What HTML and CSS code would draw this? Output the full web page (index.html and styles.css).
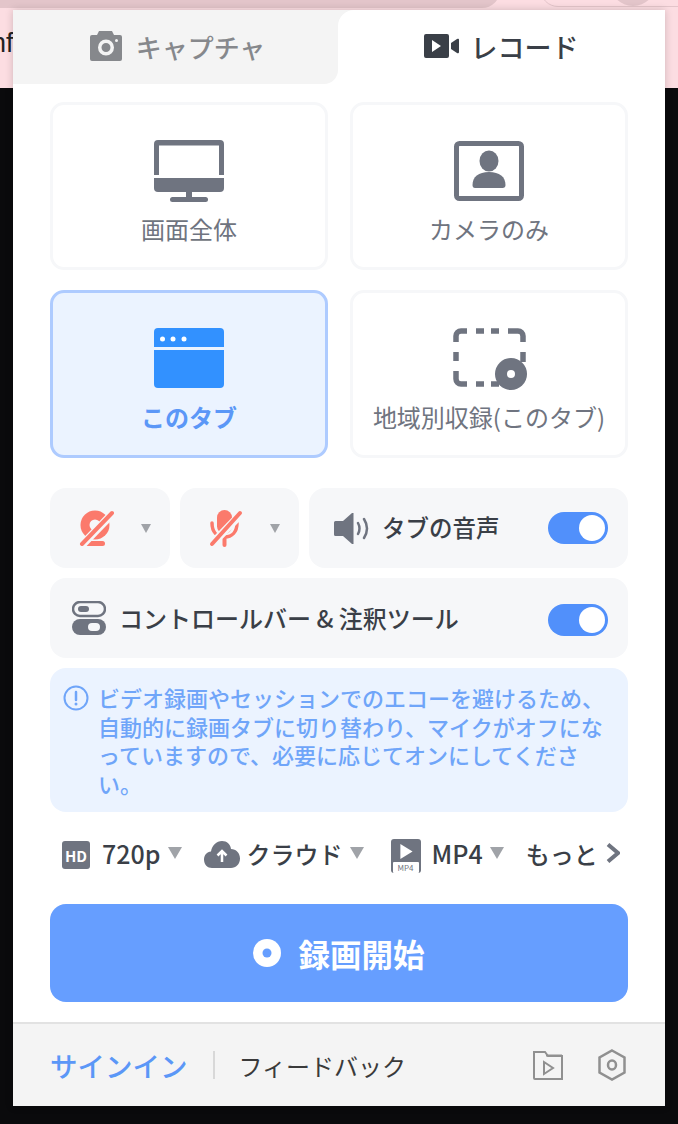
FILE: index.html
```html
<!DOCTYPE html>
<html lang="ja">
<head>
  <meta charset="UTF-8">
  <meta name="viewport" content="width=device-width, initial-scale=1">
  <title>レコード</title>
  <link rel="stylesheet" href="styles.css">
</head>
<body>
  <div class="backdrop">
    <div class="backdrop-bar"></div>
    <div class="backdrop-pill"></div>
    <div class="backdrop-avatar"></div>
    <span class="backdrop-text">nf</span>
  </div>

  <div class="popup">
    <div class="tabs">
      <div class="tab tab-off">
        <svg width="32" height="30" viewBox="0 0 32 30"><path fill="#86888c" fill-rule="evenodd" d="M9 0h13l2 4h6a2 2 0 0 1 2 2v22a2 2 0 0 1-2 2H2a2 2 0 0 1-2-2V6a2 2 0 0 1 2-2h5zM16 8.500a8 8 0 1 0 0 16 8 8 0 0 0 0-16zM16 12a4.500 4.500 0 1 1 0 9 4.500 4.500 0 0 1 0-9zM26.500 8a1.500 1.500 0 1 0 0 3 1.500 1.500 0 0 0 0-3z"/></svg>
        <span>キャプチャ</span>
      </div>
      <div class="tab tab-on">
        <svg width="35" height="24" viewBox="0 0 35 24"><path fill="#3a3f47" fill-rule="evenodd" d="M2 0h21a2 2 0 0 1 2 2v20a2 2 0 0 1-2 2H2a2 2 0 0 1-2-2V2a2 2 0 0 1 2-2zM8 6v12l9-6z"/><path fill="#3a3f47" d="M27 9l6-4a1.200 1.200 0 0 1 2 1v12a1.200 1.200 0 0 1-2 1l-6-4z"/></svg>
        <span>レコード</span>
      </div>
    </div>

    <div class="panel">
      <div class="modes">
        <div class="mode">
          <svg width="70" height="62" viewBox="0 0 70 62"><g fill="#6f7480"><path d="M0 35V4a4 4 0 0 1 4-4h62a4 4 0 0 1 4 4v31h-5V5.500H5V35z"/><path d="M0 38h70v10a4 4 0 0 1-4 4H4a4 4 0 0 1-4-4z"/><rect x="32" y="52" width="6" height="6"/><rect x="16" y="57" width="38" height="5" rx="2.500"/></g></svg>
          <span>画面全体</span>
        </div>
        <div class="mode">
          <svg width="70" height="62" viewBox="0 -1 70 62"><rect x="2.500" y="2.500" width="65" height="55" rx="3" fill="none" stroke="#6f7480" stroke-width="5"/><ellipse cx="35" cy="20" rx="9.500" ry="10.500" fill="#6f7480"/><path fill="#6f7480" d="M18.500 44c0-8 6-13 16.500-13s16.500 5 16.500 13q0 3-3 3H21q-2.500 0-2.500-3z"/></svg>
          <span>カメラのみ</span>
        </div>
        <div class="mode mode-on">
          <svg width="70" height="62" viewBox="0 0 70 62"><path fill="#3291ff" d="M4 0h62a4 4 0 0 1 4 4v15H0V4a4 4 0 0 1 4-4z"/><path fill="#3291ff" d="M0 22h70v34a4 4 0 0 1-4 4H4a4 4 0 0 1-4-4z"/><g fill="#fff"><circle cx="8.500" cy="11" r="2.500"/><circle cx="19" cy="11" r="2.500"/><circle cx="30" cy="11" r="2.500"/></g></svg>
          <span>このタブ</span>
        </div>
        <div class="mode">
          <svg width="76" height="62" viewBox="-2 0 76 62"><g fill="none" stroke="#6f7480" stroke-width="5.500"><path d="M3 14V8a5 5 0 0 1 5-5h6"/><path d="M23 3h8M38 3h8"/><path d="M55 3h10a5 5 0 0 1 5 5v6"/><path d="M3 24v9"/><path d="M70 24v10"/><path d="M3 43v8a5 5 0 0 0 5 5h6"/><path d="M23 56h8M38 56h8"/></g><circle cx="58" cy="46" r="16" fill="#6f7480"/><circle cx="58" cy="46" r="4" fill="#fff"/></svg>
          <span>地域別収録(このタブ)</span>
        </div>
      </div>

      <div class="controls">
        <div class="box box-device">
          <svg width="35" height="36" viewBox="-1 0 35 36"><circle cx="15" cy="15" r="14.500" fill="#fb7a6c"/><circle cx="15" cy="15" r="5.500" fill="#f6f7f9"/><rect x="5" y="31" width="20" height="5" rx="2.500" fill="#fb7a6c"/><path d="M2 35L32 4" stroke="#f6f7f9" stroke-width="8"/><path d="M2 34L32 3" stroke="#fb7a6c" stroke-width="4" stroke-linecap="round"/></svg>
          <i class="caret"></i>
        </div>
        <div class="box box-device">
          <svg width="34" height="38" viewBox="0 0 34 38"><rect x="8" y="1" width="15" height="24" rx="7.500" fill="#fb7a6c"/><path d="M3 14c0 9 5 14 12.500 14S28 23 28 14" fill="none" stroke="#fb7a6c" stroke-width="3.500" stroke-linecap="round"/><path d="M15.500 28v8" stroke="#fb7a6c" stroke-width="4" stroke-linecap="round"/><path d="M2 36L32 5" stroke="#f6f7f9" stroke-width="8"/><path d="M3 35L31 4" stroke="#fb7a6c" stroke-width="4" stroke-linecap="round"/></svg>
          <i class="caret"></i>
        </div>
        <div class="box box-audio">
          <svg width="35" height="31" viewBox="0 0 35 31"><path fill="#6f7480" d="M1.500 8H9l9-8h1.500v31H18l-9-8H1.500A1.500 1.500 0 0 1 0 21.500v-12A1.500 1.500 0 0 1 1.500 8z"/><path fill="none" stroke="#6f7480" stroke-width="2.500" stroke-linecap="round" d="M24 10q3 5.500 0 11M30 6q6 9.500 0 19"/></svg>
          <span class="box-label">タブの音声</span>
          <div class="toggle"><i></i></div>
        </div>
        <div class="box box-bar">
          <svg width="34" height="34" viewBox="0 0 34 34"><rect x="1" y="1" width="32" height="14" rx="7" fill="none" stroke="#6f7480" stroke-width="2.500"/><rect x="6" y="5" width="11" height="6" rx="3" fill="#6f7480"/><rect y="18" width="34" height="16" rx="8" fill="#6f7480"/><rect x="16" y="22" width="12" height="8" rx="4" fill="#f6f7f9"/></svg>
          <span class="box-label">コントロールバー &amp; 注釈ツール</span>
          <div class="toggle"><i></i></div>
        </div>
      </div>

      <div class="notice">
        <svg width="26" height="26" viewBox="0 0 26 26"><circle cx="13" cy="13" r="11.500" fill="none" stroke="#6fa5f9" stroke-width="2"/><path d="M13 7v8" stroke="#6fa5f9" stroke-width="2.500" stroke-linecap="round"/><circle cx="13" cy="19" r="1.500" fill="#6fa5f9"/></svg>
        <p>ビデオ録画やセッションでのエコーを避けるため、自動的に録画タブに切り替わり、マイクがオフになっていますので、必要に応じてオンにしてください。</p>
      </div>

      <div class="options">
        <div class="option">
          <span class="hd">HD</span>
          <span class="option-text option-latin">720p</span>
          <i class="caret caret-big"></i>
        </div>
        <div class="option">
          <svg class="cloud" width="36" height="27" viewBox="0 0 36 27"><path fill="#6f7480" d="M18 0c5 0 8.500 3.500 9 8 5 0 9 4 9 9.500S32 27 27 27H8c-4.500 0-8-3.500-8-8.500C0 14 3 11 7 10.500 8 4.500 12.500 0 18 0z"/><path d="M18 21v-11M13.500 14.500L18 10l4.500 4.500" fill="none" stroke="#fff" stroke-width="2.500"/></svg>
          <span class="option-text">クラウド</span>
          <i class="caret caret-big"></i>
        </div>
        <div class="option option-format">
          <div class="mp4">
            <svg width="14" height="16" viewBox="0 0 14 16"><path d="M1 0l13 8-13 8z" fill="#fff"/></svg>
            <span>MP4</span>
          </div>
          <span class="option-text option-latin">MP4</span>
          <i class="caret caret-big"></i>
        </div>
        <div class="option option-more">
          <span class="option-text">もっと</span>
          <svg width="14" height="20" viewBox="0 0 14 20"><path d="M2 1.500l10 8.500-10 8.500" fill="none" stroke="#6f7480" stroke-width="4"/></svg>
        </div>
      </div>

      <button class="start">
        <svg width="28" height="28" viewBox="0 0 28 28"><circle cx="14" cy="14" r="14" fill="#fff"/><circle cx="14" cy="14" r="4.500" fill="#669eff"/></svg>
        <span>録画開始</span>
      </button>
    </div>

    <div class="footer">
      <a class="signin">サインイン</a>
      <span class="feedback">フィードバック</span>
      <div class="footer-icons">
        <svg width="30" height="30" viewBox="0 0 30 30"><g fill="none" stroke="#909090" stroke-width="2"><path d="M1 28V2h11l3 4h14v23H2a1 1 0 0 1-1-1z"/><path d="M13 5.500h16"/><path d="M11 12l9 6-9 6z"/></g></svg>
        <svg width="28" height="32" viewBox="0 0 28 32"><g fill="none" stroke="#909090" stroke-width="2.500"><path d="M14 1.500l12.500 7v15l-12.500 7-12.500-7v-15z"/><ellipse cx="14" cy="16" rx="4" ry="4.500"/></g></svg>
      </div>
    </div>
  </div>
</body>
</html>
```

FILE: styles.css
```css
* {
  box-sizing: border-box;
}
html, body {
  height: 100%;
}
body {
  margin: 0;
  background: #0a0a0c;
  font-family: 'Noto Sans CJK JP', 'Noto Sans', sans-serif;
  overflow: hidden;
  position: relative;
}

/* page behind the popup */
.backdrop {
  position: absolute;
  top: 0;
  left: 0;
  right: 0;
  height: 88px;
  background: #fcdde2;
  overflow: hidden;
}
.backdrop-bar {
  position: absolute;
  top: -30px;
  left: -20px;
  width: 520px;
  height: 38px;
  background: #e3c5ca;
  border-radius: 18px;
}
.backdrop-pill {
  position: absolute;
  top: -30px;
  left: 540px;
  width: 180px;
  height: 37px;
  border: 1px solid #e3c5ca;
  border-radius: 18px;
}
.backdrop-avatar {
  position: absolute;
  top: -40px;
  left: 610px;
  width: 46px;
  height: 46px;
  background: #e3c5ca;
  border-radius: 50%;
}
.backdrop-text {
  position: absolute;
  top: 28px;
  left: -9px;
  font-family: 'Liberation Sans', sans-serif;
  font-size: 27px;
  color: #222;
}

.popup {
  position: absolute;
  top: 10px;
  left: 13px;
  width: 652px;
  height: 1096px;
  background: #fff;
  box-shadow: 0 0 8px rgba(0,0,0,0.18);
  display: flex;
  flex-direction: column;
}

/* tabs */
.tabs {
  display: flex;
  height: 74px;
  margin-bottom: 18px;
  background: linear-gradient(#f4f4f4, #f4f4f4) no-repeat 325px 0 / 20px 20px;
}
.tab {
  flex: 0 0 auto;
  display: flex;
  align-items: center;
  justify-content: center;
  font-size: 26px;
  font-weight: 500;
  padding-bottom: 2px;
}
.tab-off {
  width: 325px;
  gap: 14px;
  padding-left: 4px;
  color: #86888c;
  background: #f4f4f4;
  border-radius: 0 0 14px 0;
}
.tab-on {
  width: 327px;
  gap: 12px;
  padding-right: 1px;
  font-size: 27px;
  color: #3a3f47;
  background: #fff;
  border-radius: 16px 0 0 0;
}

.panel {
  flex: 1;
  padding: 0 37px;
  display: flex;
  flex-direction: column;
}

/* record modes */
.modes {
  display: grid;
  grid-template-columns: 278px 278px;
  grid-auto-rows: 168px;
  gap: 20px 22px;
}
.mode {
  display: flex;
  flex-direction: column;
  align-items: center;
  padding-top: 35px;
  border: 3px solid #f6f7f9;
  border-radius: 14px;
  font-size: 24px;
  color: #6f7480;
}
.mode span {
  margin-top: 9px;
  line-height: 36px;
}
.mode-on {
  background: #ebf3ff;
  border-color: #aecbff;
  color: #5b97f7;
  font-weight: 700;
}

/* device and toggle boxes */
.controls {
  display: grid;
  grid-template-columns: 120px 119px 319px;
  grid-auto-rows: 80px;
  gap: 10px;
  margin-top: 30px;
}
.box {
  display: flex;
  align-items: center;
  background: #f6f7f9;
  border-radius: 16px;
  color: #3a3f47;
  font-size: 23.500px;
  font-weight: 500;
}
.box-device {
  padding-left: 29px;
  gap: 27px;
}
.box-audio {
  padding: 0 20px 0 25px;
  gap: 13px;
}
.box-bar {
  grid-column: 1 / -1;
  padding: 0 20px 0 22px;
  gap: 13px;
  font-size: 24px;
}
.box-bar .toggle {
  margin-top: 4px;
}
.box-label {
  flex: 1;
  padding-bottom: 2px;
}
.toggle {
  width: 60px;
  height: 32px;
  padding: 3px;
  background: #5190fb;
  border-radius: 16px;
  display: flex;
  justify-content: flex-end;
}
.toggle i {
  width: 26px;
  height: 26px;
  background: #fff;
  border-radius: 50%;
}
.caret {
  width: 0;
  height: 0;
  border-top: 9px solid #a0a3a8;
  border-left: 5px solid transparent;
  border-right: 5px solid transparent;
}
.caret-big {
  border-top-width: 12px;
  border-left-width: 7px;
  border-right-width: 7px;
}

/* info box */
.notice {
  display: flex;
  gap: 9px;
  height: 144px;
  margin-top: 10px;
  padding: 15px 20px 0 13px;
  background: #ebf3ff;
  border-radius: 16px;
  color: #6fa5f9;
}
.notice svg {
  flex: none;
  margin-top: 2px;
}
.notice p {
  margin: 0;
  font-size: 22px;
  font-weight: 500;
  line-height: 28.500px;
}

/* format options */
.options {
  display: flex;
  align-items: center;
  gap: 22px;
  height: 92px;
  padding: 0 0 10px 12px;
}
.option {
  display: flex;
  align-items: center;
  gap: 7px;
}
.option-text {
  font-size: 24px;
  font-weight: 500;
  color: #3a3f47;
}
.option-latin {
  font-size: 25px;
}
.option-format {
  margin-left: 5px;
}
.hd {
  display: flex;
  align-items: center;
  justify-content: center;
  width: 28px;
  height: 28px;
  margin: 4px 5px 0 0;
  background: #6f7480;
  border-radius: 3px;
  color: #fff;
  font-size: 15px;
  font-weight: 700;
}
.cloud {
  margin-top: 2px;
}
.mp4 {
  width: 30px;
  height: 34px;
  margin: 6px 4px 0 0;
  padding-top: 5px;
  background: #6f7480;
  border-radius: 3px;
  display: flex;
  flex-direction: column;
  align-items: center;
}
.mp4 span {
  margin-top: 3px;
  width: 26px;
  height: 11px;
  background: #fff;
  border-radius: 1px;
  color: #6f7480;
  font-size: 8px;
  line-height: 11px;
  text-align: center;
}
.option-more {
  gap: 8px;
}

/* start button */
.start {
  display: flex;
  align-items: center;
  justify-content: center;
  gap: 17px;
  height: 98px;
  flex: none;
  border: 0;
  border-radius: 16px;
  background: #669eff;
  color: #fff;
  font-family: inherit;
  font-size: 31.500px;
  font-weight: 700;
  padding-bottom: 2px;
}

/* footer */
.footer {
  flex: none;
  display: flex;
  align-items: center;
  height: 84px;
  padding: 0 39px 0 37px;
  background: #f4f4f4;
  border-top: 2px solid #e2e2e2;
}
.signin {
  font-size: 27.500px;
  font-weight: 500;
  color: #5b97f7;
  padding-right: 25px;
  border-right: 2px solid #d8d8d8;
  line-height: 28px;
}
.feedback {
  flex: 1;
  margin-left: 24px;
  font-size: 24px;
  color: #3a3a3a;
}
.footer-icons {
  display: flex;
  align-items: center;
  gap: 35px;
}
```
